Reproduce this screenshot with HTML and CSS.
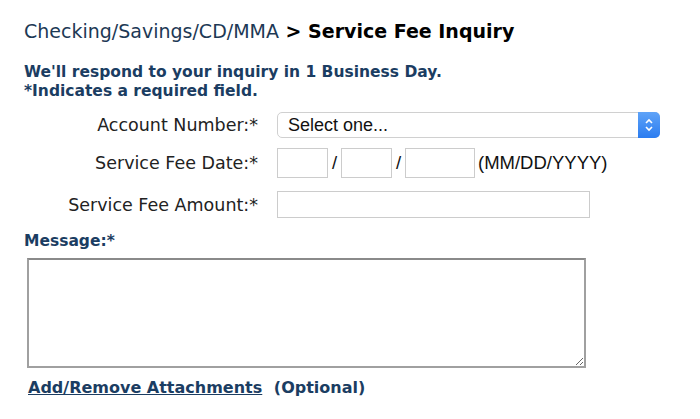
FILE: index.html
```html
<!DOCTYPE html>
<html lang="en">
<head>
    <meta charset="UTF-8">
    <title>Service Fee Inquiry</title>
    <link rel="stylesheet" href="styles.css">
</head>
<body>
    <div class="page">
        <h1><span class="crumb">Checking/Savings/CD/MMA</span> &gt; Service Fee Inquiry</h1>

        <p class="notice">We'll respond to your inquiry in 1 Business Day.<br>*Indicates a required field.</p>

        <!-- Inquiry form -->
        <form class="inquiry">
            <div class="row">
                <label for="account">Account Number:*</label>
                <div class="select-box">
                    <select id="account">
                        <option>Select one...</option>
                    </select>
                    <span class="stepper">
                        <svg width="10" height="16" viewBox="0 0 10 16"><path d="M2 6 L5 3 L8 6 M2 10 L5 13 L8 10" fill="none" stroke="#fff" stroke-width="1.6"/></svg>
                    </span>
                </div>
            </div>
            <div class="row date-row">
                <label for="month">Service Fee Date:*</label>
                <div class="date">
                    <input id="month" class="mm" type="text">
                    <span class="slash">/</span>
                    <input class="dd" type="text">
                    <span class="slash">/</span>
                    <input class="yyyy" type="text">
                    <span class="hint">(MM/DD/YYYY)</span>
                </div>
            </div>
            <div class="row">
                <label for="amount">Service Fee Amount:*</label>
                <input id="amount" class="amount" type="text">
            </div>

            <label class="message-label" for="message">Message:*</label>
            <textarea id="message"></textarea>

            <p class="attach"><a href="#">Add/Remove Attachments</a> <span>(Optional)</span></p>
        </form>
    </div>
</body>
</html>
```

FILE: styles.css
```css
body {
    margin: 0;
    background: #fff;
    font-family: "DejaVu Sans", Verdana, sans-serif;
    color: #222;
}
.page {
    padding: 19px 24px 0 24px;
}
h1 {
    margin: 0 0 20px 0;
    font-size: 19px;
    line-height: 24px;
    font-weight: bold;
    color: #000;
}
h1 .crumb {
    font-weight: normal;
    color: #1d3955;
}
.notice {
    margin: 0 0 11px 0;
    font-size: 15.5px;
    font-weight: bold;
    line-height: 19px;
    color: #1b3d62;
}
.row {
    display: grid;
    grid-template-columns: 234px auto;
    column-gap: 19px;
    align-items: center;
    margin-bottom: 10px;
}
.row.date-row {
    margin-bottom: 13px;
}
.row label {
    text-align: right;
    font-size: 17.5px;
    color: #222;
}
.select-box {
    position: relative;
    width: 383px;
    height: 26px;
}
.select-box select {
    width: 100%;
    height: 26px;
    appearance: none;
    border: 1px solid #d0d0d0;
    border-radius: 5px;
    background: #fff;
    font-family: "Liberation Sans", Arial, sans-serif;
    font-size: 18px;
    padding: 0 10px;
    color: #111;
}
.stepper {
    position: absolute;
    right: 0;
    top: 0;
    width: 22px;
    height: 26px;
    background: linear-gradient(#5fa3f8, #2b7cf0);
    border-radius: 0 5px 5px 0;
    display: flex;
    align-items: center;
    justify-content: center;
}
.date {
    display: flex;
    align-items: center;
    font-family: "Liberation Sans", Arial, sans-serif;
    font-size: 18.5px;
    color: #111;
}
input {
    box-sizing: border-box;
    border: 1px solid #ccc;
    height: 30px;
    margin: 0;
}
.mm, .dd {
    width: 51px;
}
.yyyy {
    width: 70px;
}
.slash {
    width: 13px;
    text-align: center;
}
.hint {
    margin-left: 3px;
}
.amount {
    width: 313px;
    height: 27px;
}
.message-label {
    display: block;
    margin-top: 14px;
    font-size: 15.5px;
    line-height: 18px;
    font-weight: bold;
    color: #1b3d62;
}
textarea {
    display: block;
    box-sizing: border-box;
    width: 559px;
    height: 110px;
    margin: 8px 0 0 3px;
    border: 2px solid #a0a0a0;
    border-top-color: #8a8a8a;
    resize: both;
}
.attach {
    margin: 11px 0 0 4px;
    font-size: 16px;
    line-height: 18px;
    font-weight: bold;
    color: #1b3d62;
}
.attach a {
    color: #1b3d62;
    text-decoration: underline;
    margin-right: 6px;
}
```
